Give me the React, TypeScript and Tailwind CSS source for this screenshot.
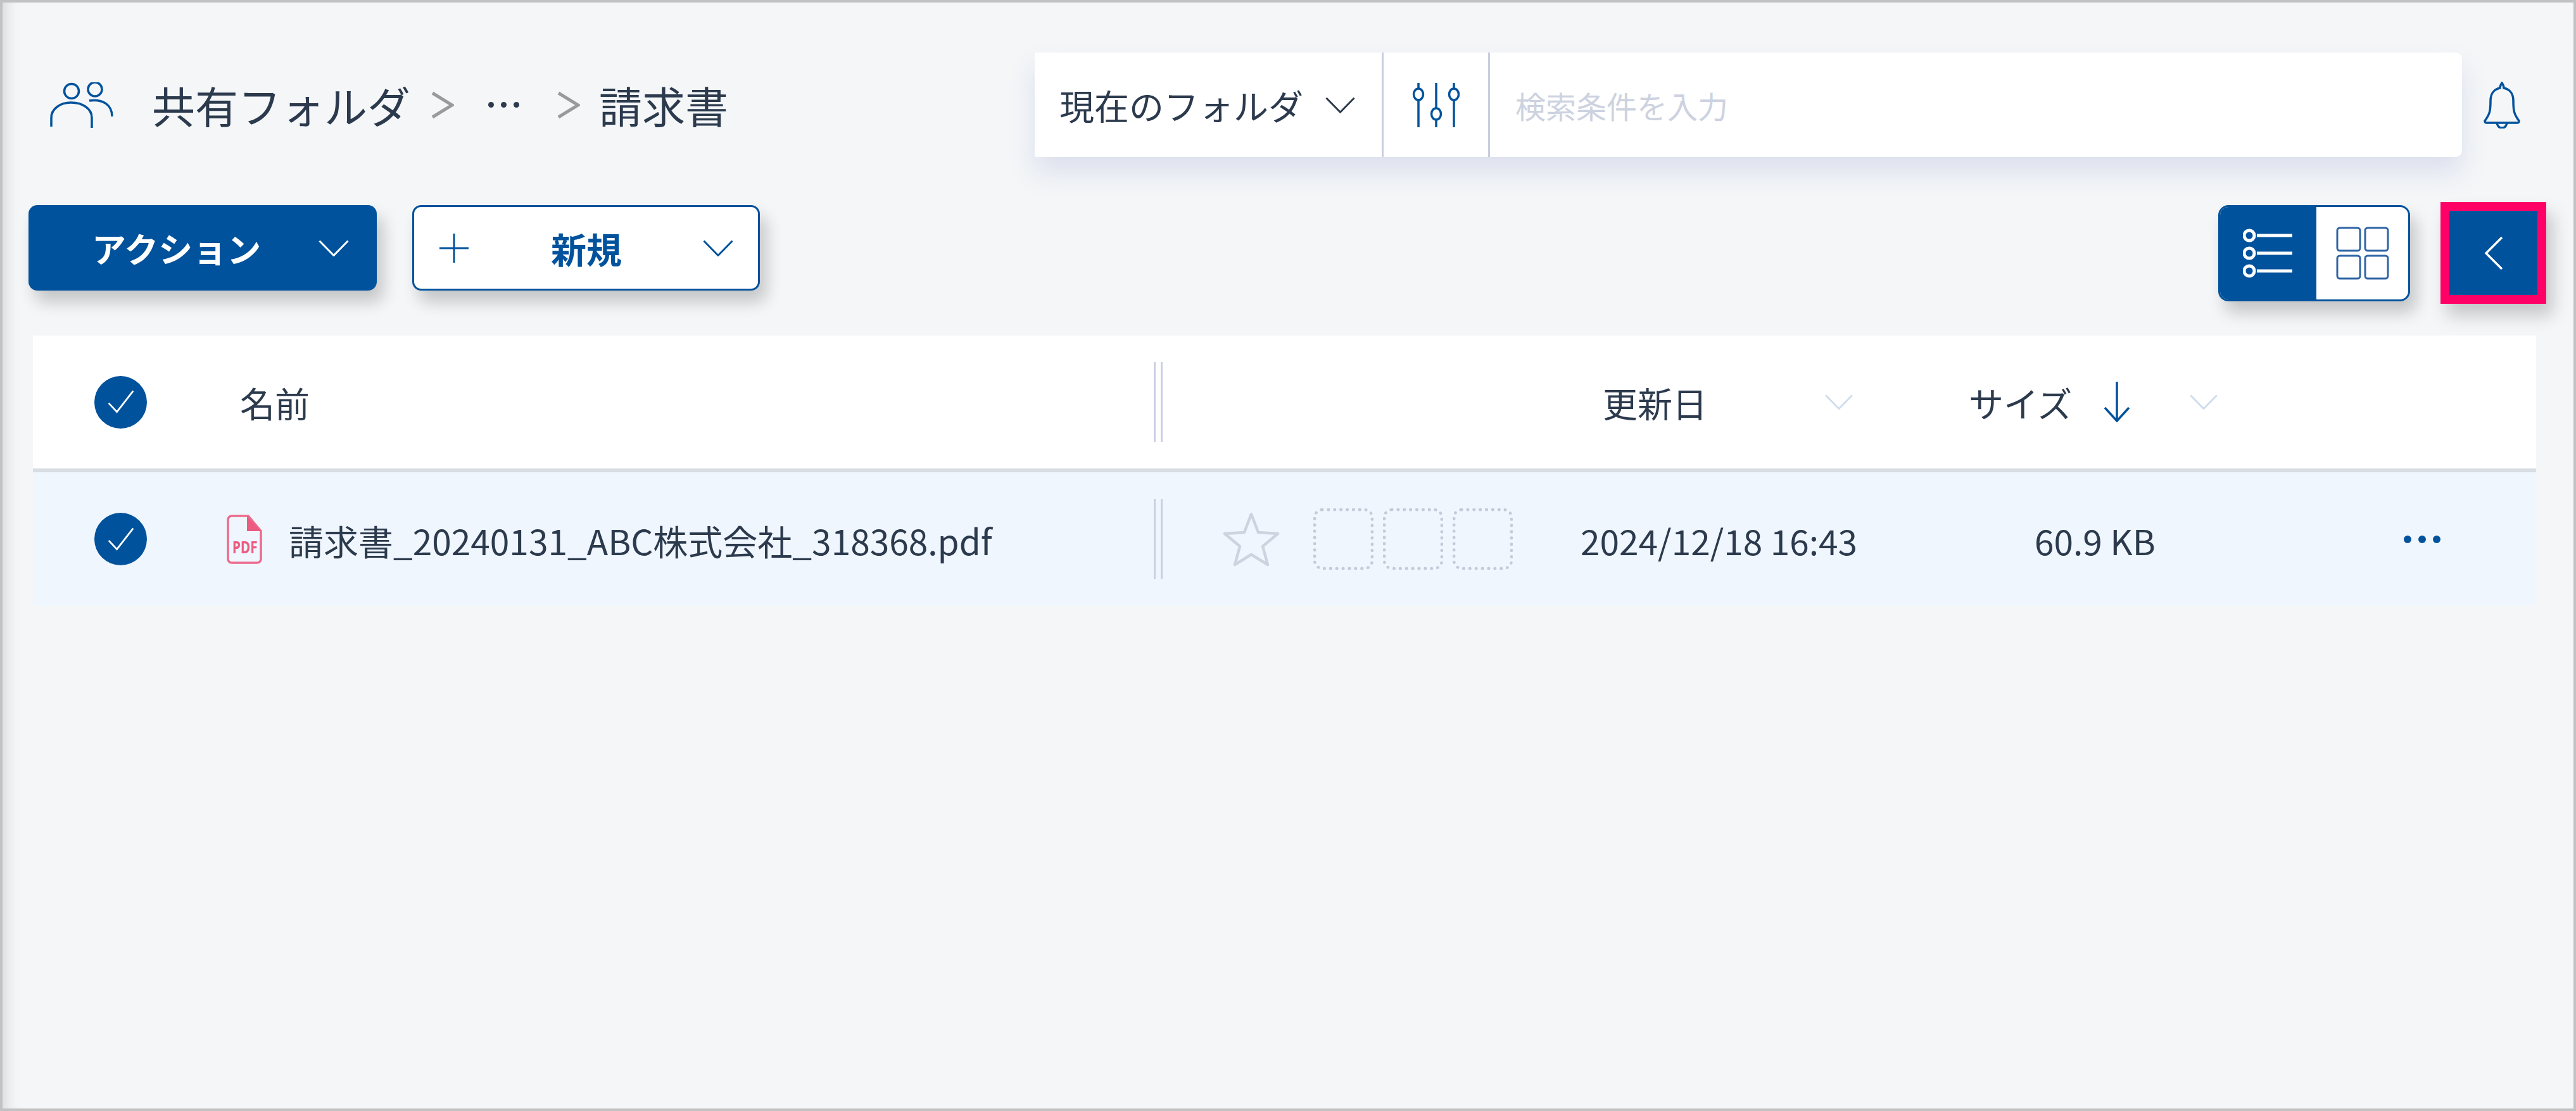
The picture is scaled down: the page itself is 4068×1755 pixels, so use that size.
import React from 'react';

const FONT = "font-['Noto_Sans_CJK_JP','Noto_Sans',sans-serif]";

const Chevron = ({ className }: { className: string }) => (
  <svg viewBox="0 0 48 26" fill="none" stroke="currentColor" strokeWidth="3" className={className}>
    <path d="M1.5 1.5 24 24.5 46.5 1.5" />
  </svg>
);

const CheckCircle = () => (
  <div className="flex h-[83px] w-[83px] items-center justify-center rounded-full bg-[#00529c]">
    <svg viewBox="0 0 48 48" fill="none" stroke="#fff" strokeWidth="3" className="h-[44px] w-[44px]">
      <path d="M3 26 17 41 45 5" />
    </svg>
  </div>
);

const Resizer = ({ className }: { className: string }) => (
  <div className={`flex w-[14px] shrink-0 justify-between ${className}`}>
    <div className="w-[3px] bg-[#cbcfe2]" />
    <div className="w-[3px] bg-[#cbcfe2]" />
  </div>
);

const DottedBox = () => (
  <div className="h-[97px] w-[95px] rounded-[14px] border-[5px] border-dotted border-[#c6cad8]" />
);

export default function App() {
  return (
    <div className={`box-border flex h-[1755px] w-[4068px] flex-col border-[4px] border-[#c2c2c2] bg-[#f4f6f8] shadow-[inset_26px_0_22px_-20px_rgba(0,0,0,0.12)] ${FONT}`}>
      {/* top bar */}
      <div className="mt-[79px] flex h-[165px] items-center pl-[75px]">
        <svg viewBox="0 0 100 72" fill="none" stroke="#00529c" strokeWidth="3.5" className="h-[72px] w-[100px] shrink-0">
          <circle cx="34" cy="14" r="11.5" />
          <circle cx="71" cy="11" r="11" />
          <path d="M2 70V56C2 42 16 32 33 32 52 32 66 42 66 56V72" />
          <path d="M62 29C84 26 98 36 98 54" />
        </svg>
        <div className="ml-[61px] flex w-[1394px] items-center text-[68px] leading-none text-[#2c3a4d]">
          <span>共有フォルダ</span>
          <svg viewBox="0 0 36 44" fill="none" stroke="#9a9a9a" strokeWidth="5" className="ml-[33px] h-[44px] w-[36px]">
            <path d="M2 3 33 22 2 41" />
          </svg>
          <span className="ml-[54px] flex gap-[11px]">
            <i className="h-[9px] w-[9px] rounded-full bg-[#2c3a4d]" />
            <i className="h-[9px] w-[9px] rounded-full bg-[#2c3a4d]" />
            <i className="h-[9px] w-[9px] rounded-full bg-[#2c3a4d]" />
          </span>
          <svg viewBox="0 0 36 44" fill="none" stroke="#9a9a9a" strokeWidth="5" className="ml-[60px] h-[44px] w-[36px]">
            <path d="M2 3 33 22 2 41" />
          </svg>
          <span className="ml-[30px]">請求書</span>
        </div>
        <div className="flex h-[165px] w-[2254px] items-stretch rounded-r-[10px] bg-white shadow-[0_24px_40px_rgba(190,198,225,0.45)]">
          <div className="flex w-[551px] items-center border-r-[3px] border-[#c9cde0] pl-[39px] text-[55px] text-[#2c3a4d]">
            <span>現在のフォルダ</span>
            <Chevron className="ml-[35px] h-[26px] w-[47px] text-[#2c3a4d]" />
          </div>
          <div className="flex w-[168px] items-center justify-center border-r-[3px] border-[#c9cde0]">
            <svg viewBox="0 0 76 72" fill="none" stroke="#00529c" strokeWidth="3.5" className="h-[72px] w-[76px]">
              <path d="M10 1v9M10 28v43M38 1v40M38 59v12M66 1v9M66 28v43" />
              <ellipse cx="10" cy="19" rx="7.5" ry="9" />
              <ellipse cx="38" cy="50" rx="7.5" ry="9" />
              <ellipse cx="66" cy="19" rx="7.5" ry="9" />
            </svg>
          </div>
          <div className="flex items-center pl-[40px] text-[48px] text-[#cdd2e0]">検索条件を入力</div>
        </div>
        <svg viewBox="0 0 60 74" fill="none" stroke="#00529c" strokeWidth="3.5" className="ml-[33px] h-[74px] w-[60px]">
          <path d="M30 2c-2 3-3 5-3 8-10 2-15 10-15 20 0 16-1 21-9 32 0 2 1 3 3 3h48c2 0 3-1 3-3-8-11-9-16-9-32 0-10-5-18-15-20 0-3-1-5-3-8Z" />
          <path d="M22 65c1 5 4 8 8 8s7-3 8-8" />
        </svg>
      </div>

      {/* toolbar */}
      <div className="mt-[71px] flex items-start pl-[41px] pr-[43px]">
        <div className="mt-[5px] flex h-[135px] w-[550px] items-center rounded-[14px] bg-[#00529c] pl-[100px] text-[54px] font-bold text-white shadow-[10px_18px_26px_rgba(0,0,0,0.2)]">
          <span>アクション</span>
          <Chevron className="ml-[91px] h-[26px] w-[48px] text-white" />
        </div>
        <div className="ml-[56px] mt-[5px] box-border flex h-[135px] w-[549px] items-center rounded-[14px] border-[3px] border-[#00529c] bg-white pl-[40px] text-[56px] font-bold text-[#00529c] shadow-[10px_18px_26px_rgba(0,0,0,0.2)]">
          <svg viewBox="0 0 46 46" fill="none" stroke="#00529c" strokeWidth="3" className="h-[46px] w-[46px]">
            <path d="M23 0v46M0 23h46" />
          </svg>
          <span className="ml-[130px]">新規</span>
          <Chevron className="ml-[128px] h-[26px] w-[48px] text-[#00529c]" />
        </div>
        <div className="ml-auto mt-[5px] box-border flex h-[152px] w-[303px] overflow-hidden rounded-[16px] border-[3px] border-[#00529c] bg-white shadow-[10px_18px_26px_rgba(0,0,0,0.2)]">
          <div className="flex w-[152px] items-center justify-center bg-[#00529c]">
            <svg viewBox="0 0 80 78" fill="none" stroke="#fff" strokeWidth="5" className="h-[78px] w-[80px]">
              <circle cx="10" cy="11" r="8" />
              <circle cx="10" cy="39" r="8" />
              <circle cx="10" cy="67" r="8" />
              <path d="M22 11h56M22 39h56M22 67h56" />
            </svg>
          </div>
          <div className="flex flex-1 items-center justify-center">
            <svg viewBox="0 0 84 84" fill="none" stroke="#2f65a5" strokeWidth="3" className="h-[84px] w-[84px]">
              <rect x="2" y="2" width="36" height="36" rx="4" />
              <rect x="46" y="2" width="36" height="36" rx="4" />
              <rect x="2" y="46" width="36" height="36" rx="4" />
              <rect x="46" y="46" width="36" height="36" rx="4" />
            </svg>
          </div>
        </div>
        <div className="ml-[48px] box-border flex h-[161px] w-[167px] items-center justify-center border-[14px] border-[#ff0066] bg-[#00529c] shadow-[10px_18px_26px_rgba(0,0,0,0.2)]">
          <svg viewBox="0 0 30 54" fill="none" stroke="#fff" strokeWidth="3.5" className="h-[54px] w-[30px]">
            <path d="M28 2 3 27 28 52" />
          </svg>
        </div>
      </div>

      {/* file table */}
      <div className="ml-[48px] mr-[59px] mt-[50px] text-[#2c3a4d]">
        <div className="flex h-[216px] items-center border-b-[6px] border-[#d8dce3] bg-white text-[55px]">
          <div className="w-[306px] shrink-0 pl-[97px]">
            <CheckCircle />
          </div>
          <div className="w-[1464px] shrink-0 pl-[21px]">名前</div>
          <Resizer className="h-[126px]" />
          <div className="ml-[695px]">更新日</div>
          <Chevron className="ml-[185px] h-[24px] w-[46px] text-[#cbdcec]" />
          <div className="ml-[182px]">サイズ</div>
          <svg viewBox="0 0 42 64" fill="none" stroke="#00529c" strokeWidth="3.5" className="ml-[50px] h-[64px] w-[42px]">
            <path d="M21 0v62M2 41l19 21 19-21" />
          </svg>
          <Chevron className="ml-[93px] h-[24px] w-[46px] text-[#cbdcec]" />
        </div>
        <div className="flex h-[211px] items-center bg-[#f0f6fe] text-[55px]">
          <div className="w-[306px] shrink-0 pl-[97px]">
            <CheckCircle />
          </div>
          <div className="flex w-[1464px] shrink-0 items-center">
            <svg viewBox="0 0 56 78" fill="none" className="h-[78px] w-[56px] shrink-0">
              <path d="M8 2h26l20 24v44a6 6 0 0 1-6 6H8a6 6 0 0 1-6-6V8a6 6 0 0 1 6-6Z" stroke="#ec6a8a" strokeWidth="3.5" />
              <path d="M32 2 54 26H32Z" fill="#ec5c80" />
              <text x="36" y="61" textAnchor="middle" fontSize="26" fontWeight="700" fill="#ec5c80" fontFamily="Noto Sans" transform="scale(0.8 1)">PDF</text>
            </svg>
            <span className="ml-[42px] mt-[3px] whitespace-nowrap">請求書_20240131_ABC株式会社_318368.pdf</span>
          </div>
          <Resizer className="h-[127px]" />
          <svg viewBox="0 0 90 86" fill="none" stroke="#cfd3df" strokeWidth="4.5" strokeLinejoin="round" className="ml-[95px] h-[86px] w-[90px] shrink-0">
            <path d="M45 3 56 32 87 34 63 54 71 83 45 67 19 83 27 54 3 34 34 32Z" />
          </svg>
          <div className="ml-[53px] flex gap-[15px]">
            <DottedBox />
            <DottedBox />
            <DottedBox />
          </div>
          <div className="ml-[107px] mt-[3px] whitespace-nowrap">2024/12/18 16:43</div>
          <div className="ml-[280px] mt-[3px] whitespace-nowrap">60.9 KB</div>
          <div className="ml-[392px] flex gap-[11px]">
            <i className="h-[12px] w-[12px] rounded-full bg-[#00529c]" />
            <i className="h-[12px] w-[12px] rounded-full bg-[#00529c]" />
            <i className="h-[12px] w-[12px] rounded-full bg-[#00529c]" />
          </div>
        </div>
      </div>
    </div>
  );
}
